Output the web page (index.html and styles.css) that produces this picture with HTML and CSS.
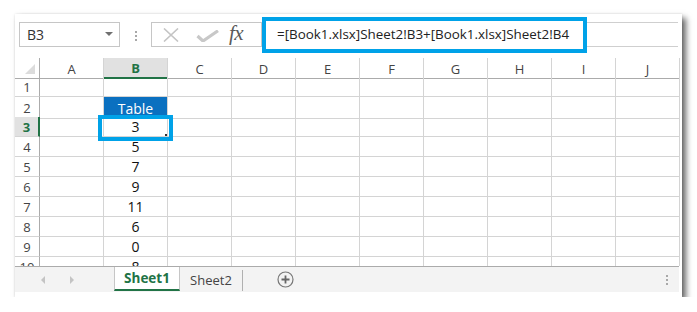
FILE: index.html
```html
<!DOCTYPE html>
<html>
<head>
<meta charset="utf-8">
<link rel="stylesheet" href="styles.css">
</head>
<body>
<div class="window">
  <div class="fbar">
    <div class="namebox"><span class="nb-text">B3</span><span class="caret"></span></div>
    <div class="grip"><i></i><i></i><i></i></div>
    <div class="btns">
      <svg class="ico-x" width="18" height="14" viewBox="0 0 18 14"><path d="M2 0.5 L16 13.5 M16 0.5 L2 13.5" stroke="#c4c4c4" stroke-width="1.6" fill="none"/></svg>
      <svg class="ico-ok" width="24" height="12" viewBox="0 0 24 12"><path d="M1.5 6 L7 11 L22 0.8" stroke="#c8c8c8" stroke-width="3.2" fill="none" stroke-linejoin="miter"/></svg>
      <span class="fx">fx</span>
    </div>
    <div class="formula">=[Book1.xlsx]Sheet2!B3+[Book1.xlsx]Sheet2!B4</div>
    <div class="fill"></div>
  </div>
  <div class="sheet">
    <div class="row head">
      <div class="corner"><span class="tri"></span></div>
      <div class="ch">A</div><div class="ch active">B</div><div class="ch">C</div><div class="ch">D</div><div class="ch">E</div><div class="ch">F</div><div class="ch">G</div><div class="ch">H</div><div class="ch">I</div><div class="ch">J</div>
    </div>
    <div class="row"><div class="rh">1</div><div class="c"></div><div class="c"></div><div class="c"></div><div class="c"></div><div class="c"></div><div class="c"></div><div class="c"></div><div class="c"></div><div class="c"></div><div class="c"></div></div>
    <div class="row"><div class="rh">2</div><div class="c"></div><div class="c thead">Table</div><div class="c"></div><div class="c"></div><div class="c"></div><div class="c"></div><div class="c"></div><div class="c"></div><div class="c"></div><div class="c"></div></div>
    <div class="row"><div class="rh active">3</div><div class="c"></div><div class="c">3</div><div class="c"></div><div class="c"></div><div class="c"></div><div class="c"></div><div class="c"></div><div class="c"></div><div class="c"></div><div class="c"></div></div>
    <div class="row"><div class="rh">4</div><div class="c"></div><div class="c">5</div><div class="c"></div><div class="c"></div><div class="c"></div><div class="c"></div><div class="c"></div><div class="c"></div><div class="c"></div><div class="c"></div></div>
    <div class="row"><div class="rh">5</div><div class="c"></div><div class="c">7</div><div class="c"></div><div class="c"></div><div class="c"></div><div class="c"></div><div class="c"></div><div class="c"></div><div class="c"></div><div class="c"></div></div>
    <div class="row"><div class="rh">6</div><div class="c"></div><div class="c">9</div><div class="c"></div><div class="c"></div><div class="c"></div><div class="c"></div><div class="c"></div><div class="c"></div><div class="c"></div><div class="c"></div></div>
    <div class="row"><div class="rh">7</div><div class="c"></div><div class="c">11</div><div class="c"></div><div class="c"></div><div class="c"></div><div class="c"></div><div class="c"></div><div class="c"></div><div class="c"></div><div class="c"></div></div>
    <div class="row"><div class="rh">8</div><div class="c"></div><div class="c">6</div><div class="c"></div><div class="c"></div><div class="c"></div><div class="c"></div><div class="c"></div><div class="c"></div><div class="c"></div><div class="c"></div></div>
    <div class="row"><div class="rh">9</div><div class="c"></div><div class="c">0</div><div class="c"></div><div class="c"></div><div class="c"></div><div class="c"></div><div class="c"></div><div class="c"></div><div class="c"></div><div class="c"></div></div>
    <div class="row"><div class="rh">10</div><div class="c"></div><div class="c">8</div><div class="c"></div><div class="c"></div><div class="c"></div><div class="c"></div><div class="c"></div><div class="c"></div><div class="c"></div><div class="c"></div></div>
    <div class="sel"><span class="handle"></span></div>
  </div>
  <div class="tabs">
    <div class="nav"><span class="arr left"></span><span class="arr right"></span></div>
    <div class="tab on">Sheet1</div>
    <div class="tab">Sheet2</div>
    <div class="add"><svg width="17" height="17" viewBox="0 0 17 17"><circle cx="8.5" cy="8.5" r="7.5" stroke="#777" stroke-width="1.2" fill="none"/><path d="M8.5 4.5 V12.5 M4.5 8.5 H12.5" stroke="#666" stroke-width="1.8"/></svg></div>
    <div class="vdots"><i></i><i></i><i></i></div>
  </div>
</div>
</body>
</html>
```
FILE: styles.css
```css
html, body { margin: 0; padding: 0; background: #fff; }
body { font-family: "Open Sans", "Noto Sans", sans-serif; }

.window {
  margin: 14px 0 0 15px;
  width: 667px;
  height: 283px;
  background: #fff;
  box-shadow: 4px 4px 6px rgba(0,0,0,0.6), 0 0 2px rgba(0,0,0,0.12);
  display: flex;
  flex-direction: column;
}

.fbar {
  height: 44px;
  display: flex;
  align-items: flex-start;
  padding-left: 4px;
  flex: none;
}
.namebox {
  margin-top: 8px;
  width: 101px;
  height: 25px;
  box-sizing: border-box;
  border: 1px solid #c6c6c6;
  display: flex;
  align-items: center;
  justify-content: space-between;
  padding: 0 6px 0 7px;
  font-size: 14px;
  color: #333;
}
.caret {
  width: 0; height: 0;
  border-left: 4px solid transparent;
  border-right: 4px solid transparent;
  border-top: 4px solid #707070;
  margin-top: -2px;
}
.grip {
  width: 31px;
  height: 44px;
  display: flex;
  flex-direction: column;
  align-items: center;
  justify-content: center;
  gap: 2px;
}
.grip i { display: block; width: 2px; height: 2px; background: #a8a8a8; }
.btns {
  margin-top: 8px;
  width: 111px;
  height: 25px;
  box-sizing: border-box;
  border: 1px solid #c6c6c6;
  display: flex;
  align-items: center;
  position: relative;
}
.ico-x { margin-left: 10px; margin-top: 0; }
.ico-ok { margin-left: 16px; margin-top: 3px; }
.fx {
  font-family: "Liberation Serif", "DejaVu Serif", serif;
  font-style: italic;
  font-size: 21px;
  color: #5a5a5a;
  margin-left: 9px;
  margin-top: -3px;
  letter-spacing: -0.5px;
}
.formula {
  margin-top: 3px;
  width: 325px;
  height: 36px;
  box-sizing: border-box;
  border: 4px solid #00a2e8;
  font-size: 13.4px;
  color: #222;
  line-height: 27px;
  padding-left: 11px;
  white-space: nowrap;
}
.fill {
  flex: 1;
  margin-top: 8px;
  margin-right: 4px;
  height: 25px;
  box-sizing: border-box;
  border-top: 1px solid #cfcfcf;
  border-bottom: 1px solid #cfcfcf;
}

.sheet {
  height: 208px;
  overflow: hidden;
  position: relative;
  flex: none;
}
.row {
  display: grid;
  grid-template-columns: 25px repeat(10, 64px);
  height: 20px;
}
.row.head { height: 19px; }
.row > div {
  box-sizing: border-box;
  border-right: 1px solid #d4d4d4;
  border-bottom: 1px solid #d4d4d4;
  display: flex;
  align-items: center;
  justify-content: center;
}
.corner { border-right: 1px solid #ababab !important; border-bottom: 1px solid #ababab !important; position: relative; }
.tri {
  position: absolute;
  right: 4px;
  bottom: 4px;
  width: 0; height: 0;
  border-left: 10px solid transparent;
  border-bottom: 10px solid #dcdcdc;
}
.ch {
  font-size: 13px;
  color: #444;
  border-bottom: 1px solid #ababab !important;
  padding-top: 1px;
}
.ch.active {
  background: #e1e1e1;
  color: #217346;
  font-weight: bold;
  border-bottom: 2px solid #217346 !important;
}
.rh {
  font-size: 13px;
  color: #444;
  border-right: 1px solid #ababab !important;
}
.rh.active {
  background: #e1e1e1;
  color: #217346;
  font-weight: bold;
  border-right: 2px solid #217346 !important;
}
.c { font-size: 14px; color: #111; }
.c.thead {
  background: #0a70c0;
  color: #fff;
  border-bottom-color: #0a70c0;
  padding-top: 2px;
}
.sel {
  position: absolute;
  left: 83px;
  top: 57px;
  width: 75px;
  height: 26px;
  box-sizing: border-box;
  border: 4px solid #00a2e8;
}
.handle {
  position: absolute;
  right: 2px;
  bottom: 1px;
  width: 2px;
  height: 2px;
  background: #333;
}

.tabs {
  height: 26px;
  box-sizing: border-box;
  border-top: 1px solid #ababab;
  background: #f3f3f3;
  display: flex;
  align-items: stretch;
  flex: none;
  margin-right: 3px;
}
.nav {
  width: 99px;
  position: relative;
}
.arr {
  position: absolute;
  top: 9px;
  width: 0; height: 0;
  border-top: 4px solid transparent;
  border-bottom: 4px solid transparent;
}
.arr.left { left: 26px; border-right: 4px solid #c4c4c4; }
.arr.right { left: 55px; border-left: 4px solid #c4c4c4; }
.tab {
  font-size: 13.5px;
  color: #444;
  display: flex;
  align-items: center;
  justify-content: center;
  box-sizing: border-box;
}
.tab.on {
  width: 66px;
  background: #fff;
  color: #217346;
  font-weight: bold;
  border-left: 1px solid #c6c6c6;
  border-right: 1px solid #c6c6c6;
  border-bottom: 2px solid #217346;
  height: 24px;
}
.tab:not(.on) {
  width: 63px;
  position: relative;
  font-size: 13px;
  padding-right: 1px;
}
.tab:not(.on)::after {
  content: "";
  position: absolute;
  right: 0;
  top: 3px;
  bottom: 1px;
  width: 1px;
  background: #b0b0b0;
}
.add {
  margin-left: 34px;
  display: flex;
  align-items: center;
}
.vdots {
  margin-left: auto;
  margin-right: 11px;
  display: flex;
  flex-direction: column;
  justify-content: center;
  gap: 2px;
}
.vdots i { display: block; width: 2px; height: 2px; background: #a8a8a8; }
```
